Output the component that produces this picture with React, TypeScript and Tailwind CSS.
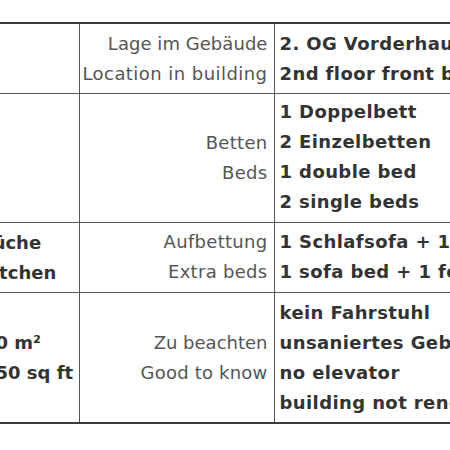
import React from "react";

const font = { fontFamily: '"DejaVu Sans", Verdana, sans-serif' };

export default function App() {
  return (
    <div className="w-[450px] h-[450px] overflow-hidden bg-white" style={font}>
      <table className="mt-[22px] -ml-[30px] border-collapse text-[18px] leading-[30px] table-fixed w-[620px]">
        <colgroup>
          <col className="w-[109px]" />
          <col className="w-[195px]" />
          <col className="w-[316px]" />
        </colgroup>
        <tbody>
          <tr className="border-t-2 border-[#3a3a3a]">
            <td className="border-r border-b border-[#555] pt-[5px] pb-[4px]"></td>
            <td className="border-r border-b border-[#555] text-right pr-[6px] pt-[5px] pb-[4px] text-[#555] whitespace-nowrap align-middle">
              <div className="tracking-[0.05px]">Lage im Gebäude</div>
              <div className="tracking-[0.45px]">Location in building</div>
            </td>
            <td className="border-b border-[#555] pl-[5px] pt-[5px] pb-[4px] font-bold text-[#333] tracking-[0.4px] whitespace-nowrap">
              <div>2. OG Vorderhaus</div>
              <div>2nd floor front building</div>
            </td>
          </tr>
          <tr>
            <td className="border-r border-b border-[#555]"></td>
            <td className="border-r border-b border-[#555] text-right pr-[6px] text-[#555] tracking-[0.3px] align-middle">
              <div>Betten</div>
              <div>Beds</div>
            </td>
            <td className="border-b border-[#555] pl-[5px] pt-[3px] pb-[5px] font-bold text-[#333] tracking-[0.4px] whitespace-nowrap">
              <div>1 Doppelbett</div>
              <div>2 Einzelbetten</div>
              <div>1 double bed</div>
              <div>2 single beds</div>
            </td>
          </tr>
          <tr>
            <td className="border-r border-b border-[#555] pl-[9px] font-bold text-[#333] whitespace-nowrap align-middle">
              <div>Küche</div>
              <div>Kitchen</div>
            </td>
            <td className="border-r border-b border-[#555] text-right pr-[6px] text-[#555] tracking-[0.3px] pt-[4px] pb-[5px] align-middle">
              <div>Aufbettung</div>
              <div>Extra beds</div>
            </td>
            <td className="border-b border-[#555] pl-[5px] pt-[4px] pb-[5px] font-bold text-[#333] tracking-[0.4px] whitespace-nowrap">
              <div>1 Schlafsofa + 1 Feldbett</div>
              <div>1 sofa bed + 1 folding bed</div>
            </td>
          </tr>
          <tr className="border-b-2 border-[#3a3a3a]">
            <td className="border-r border-[#555] pl-[13px] font-bold text-[#333] whitespace-nowrap align-middle">
              <div>70 m²</div>
              <div>750 sq ft</div>
            </td>
            <td className="border-r border-[#555] text-right pr-[6px] text-[#555] align-middle">
              <div>Zu beachten</div>
              <div className="tracking-[0.2px]">Good to know</div>
            </td>
            <td className="pl-[5px] pt-[5px] pb-[4px] font-bold text-[#333] tracking-[0.4px] whitespace-nowrap">
              <div>kein Fahrstuhl</div>
              <div>unsaniertes Gebäude</div>
              <div>no elevator</div>
              <div>building not renovated</div>
            </td>
          </tr>
        </tbody>
      </table>
    </div>
  );
}
